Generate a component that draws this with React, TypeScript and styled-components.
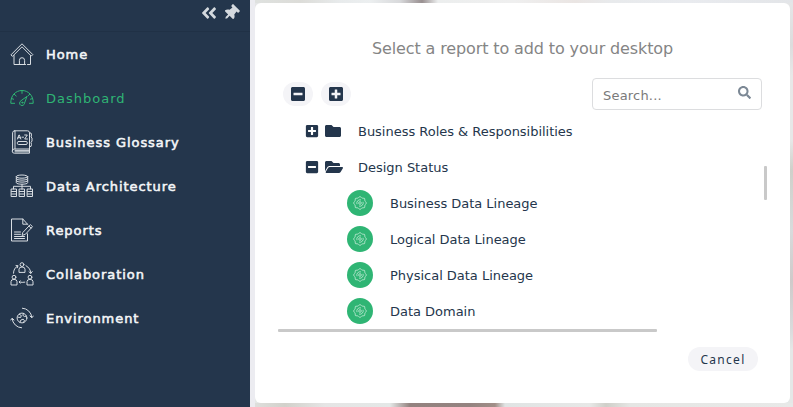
import React from 'react';
import styled, { createGlobalStyle } from 'styled-components';
import {
  FaAngleDoubleLeft,
  FaThumbtack,
  FaPlusSquare,
  FaMinusSquare,
  FaFolder,
  FaFolderOpen,
  FaSearch,
} from 'react-icons/fa';

const navy = '#24364c';
const green = '#2fb574';

const GlobalStyle = createGlobalStyle`
  * { box-sizing: border-box; }
  body {
    margin: 0;
    overflow: hidden;
    font-family: Verdana, "DejaVu Sans", sans-serif;
    color: ${navy};
  }
  svg { display: block; flex: none; }
`;

const Page = styled.div`
  display: flex;
  width: 793px;
  height: 407px;
`;

const Sidebar = styled.aside`
  width: 250px;
  height: 407px;
  background: ${navy};
  flex: none;
`;

const SidebarTop = styled.div`
  height: 32px;
  border-bottom: 1px solid #203146;
  display: flex;
  justify-content: flex-end;
  align-items: flex-start;
  gap: 5px;
  padding: 4px 8px 0 0;
  color: #d4d9de;
`;

const PinWrap = styled.span`
  width: 19px;
  height: 17px;
  display: flex;
  align-items: center;
  justify-content: flex-start;
  svg { transform: rotate(45deg); }
`;

const NavItem = styled.a<{ $active?: boolean }>`
  height: 44px;
  padding-left: 10px;
  display: flex;
  align-items: center;
  gap: 12px;
  font-size: 13px;
  letter-spacing: ${(p) => (p.$active ? '1px' : '0.94px')};
  white-space: nowrap;
  color: ${(p) => (p.$active ? green : '#f4f6f8')};
  -webkit-text-stroke: ${(p) => (p.$active ? '0' : '0.55px #f4f6f8')};
  svg {
    color: ${(p) => (p.$active ? green : '#d8dde2')};
  }
`;

const Backdrop = styled.main`
  flex: 1;
  padding: 3px 3px 4px 5px;
  background:
    linear-gradient(#ececf1, #ececf1) 0 0 / 5px 100% no-repeat,
    linear-gradient(90deg, #dfe2e0 0, #dcdcd8 50px, #e8ebec 90px, #eceff0 120px, #d8d9db 150px, #999091 172px, #eceeee 188px, #efefef 265px, #eae5e3 325px, #e8eaec 360px, #e9ebef 440px, #e3e5e8 543px) 0 0 / 100% 3px no-repeat,
    linear-gradient(90deg, #e0e1df 0, #d2d1cb 35px, #e5e5e5 75px, #e4e8e7 140px, #93827f 160px, #948380 220px, #a18f88 245px, #e0e4e4 255px, #e7e8e7 340px, #cfcfc9 356px, #e5e6e4 380px, #e8e9e8 543px) 0 100% / 100% 4px no-repeat,
    linear-gradient(180deg, #e6e7e8 0, #dcdcdd 45px, #e8e8e8 75px, #e7e8e8 140px, #cfd0ca 170px, #d8dbdc 230px, #cfcaca 280px, #dadbdc 330px, #e5e8e7 350px);
`;

const Dialog = styled.section`
  width: 535px;
  height: 400px;
  background: #fff;
  border-radius: 6px;
  display: flex;
  flex-direction: column;
`;

const Title = styled.h1`
  margin: 36px 0 0;
  font-size: 16px;
  line-height: 20px;
  font-weight: 400;
  letter-spacing: -0.12px;
  text-align: center;
  color: #858585;
`;

const Toolbar = styled.div`
  display: flex;
  align-items: center;
  gap: 8px;
  margin-top: 19px;
  padding: 0 28px;
  height: 32px;
`;

const RoundButton = styled.button`
  width: 30px;
  height: 24px;
  padding: 0;
  border: 0;
  border-radius: 12px;
  background: #f4f4f7;
  color: ${navy};
  display: flex;
  align-items: center;
  justify-content: center;
`;

const SearchBox = styled.label`
  width: 170px;
  height: 32px;
  margin-left: auto;
  border: 1px solid #dcdddf;
  border-radius: 4px;
  padding: 0 10px;
  display: flex;
  align-items: center;
  justify-content: space-between;
  font-size: 13px;
  letter-spacing: 0.2px;
  color: #7a7a7a;
  svg { color: #7c8895; margin-bottom: 3px; }
`;

const SearchText = styled.span`
  padding-top: 3px;
`;

const TreeArea = styled.div`
  display: flex;
  height: 219px;
  margin: 3px 23px 0 23px;
  justify-content: space-between;
`;

const Tree = styled.div`
  flex: 1;
`;

const TreeRow = styled.div`
  height: 36px;
  padding-left: 27px;
  display: flex;
  align-items: center;
  font-size: 13px;
  letter-spacing: -0.02px;
  white-space: nowrap;
`;

const FolderIcon = styled.span`
  width: 33px;
  margin-left: 6px;
  display: flex;
`;

const LeafRow = styled(TreeRow)`
  padding-left: 69px;
  gap: 17px;
`;

const GearBadge = styled.span`
  width: 26px;
  height: 26px;
  border-radius: 50%;
  background: ${green};
  display: flex;
  align-items: center;
  justify-content: center;
`;

const VerticalThumb = styled.div`
  width: 3px;
  height: 34px;
  margin-top: 53px;
  border-radius: 1px;
  background: #c9c9c9;
`;

const HorizontalThumb = styled.div`
  width: 379px;
  height: 3px;
  margin: -3px 0 0 23px;
  border-radius: 1px;
  background: #c9c9c9;
`;

const Footer = styled.footer`
  display: flex;
  justify-content: flex-end;
  padding: 15px 32px 0 0;
`;

const CancelButton = styled.button`
  width: 70px;
  height: 24px;
  padding: 0;
  border: 0;
  border-radius: 12px;
  background: #f4f4f7;
  color: ${navy};
  font-family: "Noto Sans", sans-serif;
  font-size: 12px;
  line-height: 23px;
  letter-spacing: 1.3px;
`;

const Line = ({ children, w = 24, h = 24 }: { children: React.ReactNode; w?: number; h?: number }) => (
  <svg width={w} height={h} viewBox={`0 0 ${w} ${h}`} fill="none" stroke="currentColor" strokeWidth="1" strokeLinejoin="round" strokeLinecap="round">
    {children}
  </svg>
);

const HomeIcon = () => (
  <Line>
    <path d="M1.2 12.6 12 1.8l10.8 10.8-1.5 1.5L12 4.8l-9.3 9.3z" />
    <path d="M4 13.5V22.5h11.5M17.5 22.5H20.5V13.5M9.4 22.5v-4.2a2.6 2.6 0 0 1 5.2 0v4.2" />
  </Line>
);

const GaugeIcon = () => (
  <Line>
    <path d="M4.6 17.3H.8C.5 9.5 5.8 4.5 12 4.5s11.5 5 11.2 12.8h-3.8M12 4.8v2.6M4.2 8.2l2 1.8M19.8 8.2l-2 1.8M1.6 12.6l2 .6M22.4 12.6l-2 .6" />
    <path d="M16.8 10.8l-2.3 6.4a2.5 2.5 0 1 1-3.8-2.3z" />
    <circle cx="12.3" cy="16.6" r=".6" />
  </Line>
);

const BookIcon = () => (
  <Line>
    <path d="M4.5.8H17.5a2 2 0 0 1 2 2V19H4.3a2 2 0 0 0 0 4.2H19.5V19M2.6 21V2.8A2 2 0 0 1 4.6.8M5 1v18M5 20.4h14M5 21.8h14M19.5 3h1.5q1 2 0 4l1 1v3l-1 1.5q1 2 0 4h-1.5" />
    <path d="M7.5 9l1.4-4h.5l1.4 4M8 7.7h2.2M12 7.2h1.5M14.7 5h2.6l-2.6 4h2.8" />
    <rect x="7.3" y="11.5" width="10" height="3" rx="1.3" />
  </Line>
);

const DataIcon = () => (
  <Line>
    <ellipse cx="12" cy="2.6" rx="5.7" ry="1.6" />
    <path d="M6.3 2.6v6.1c0 2 11.4 2 11.4 0V2.6M6.3 4.7c0 2 11.4 2 11.4 0M6.3 6.7c0 2 11.4 2 11.4 0M12 10.3v5M3.5 15v-2.7h17V15" />
    <rect x="1.5" y="15" width="5" height="7.5" />
    <rect x="9.5" y="15" width="5" height="7.5" />
    <rect x="17.5" y="15" width="5" height="7.5" />
    <path d="M1.5 17.5h5M1.5 20h5M9.5 17.5h5M9.5 20h5M17.5 17.5h5M17.5 20h5" />
  </Line>
);

const ReportIcon = () => (
  <Line>
    <path d="M17.5 6.2 12.8 1H1.5v22H17.5v-7.2M12.8 1v5.2H17.5" />
    <path d="M13.1 14.2l7.2-7.6 2.2 2-7.1 7.7-3 1zM18.9 8.1l2.2 2M4.5 14h6M4.5 16.3h6M4.5 18.5h10M4.5 20.5h10" />
  </Line>
);

const PeopleIcon = () => (
  <Line>
    <circle cx="12" cy="2.6" r="1.9" />
    <path d="M9 10V7.2q0-2.2 3-2.2t3 2.2V10z" />
    <circle cx="4" cy="15.2" r="1.9" />
    <path d="M1 22.6v-3q0-2.2 3-2.2t3 2.2v3z" />
    <circle cx="20" cy="15.2" r="1.9" />
    <path d="M17 22.6v-3q0-2.2 3-2.2t3 2.2v3z" />
    <path d="M3.5 11.2q0-5 4.3-7.3M6 3.5l2 .3-.7 2M16 3.7q4.7 2.6 4.8 7.5M19 9.8l1.8 1.6 1.4-1.8M14.8 20.2q-2.6.5-5.4-.2M10.2 18.9 9 20l1.2 1.2" />
  </Line>
);

const GlobeIcon = () => (
  <Line>
    <circle cx="12" cy="12" r="4.9" />
    <path d="M9.3 8.3l2 1.2-.6 2-2.5-.3M13.5 7.4l-.7 2 1.8 1.1 1.9-.4M10 16.1l.8-2 2.3-.9 1.3 1.2-.9 2.2" />
    <path d="M12.4 2.2a9.8 9.8 0 0 1 9.4 9M20 10l1.8 1.8L23.3 10M11.6 21.8a9.8 9.8 0 0 1-9.4-9M.8 14l1.4-1.8L4 14" />
  </Line>
);

const gearPath = Array.from({ length: 8 }, (_, i) => {
  const point = (radius: number, degrees: number) => {
    const angle = ((i * 45 + degrees) * Math.PI) / 180;
    return `${(7 + radius * Math.cos(angle)).toFixed(2)} ${(7 + radius * Math.sin(angle)).toFixed(2)}`;
  };
  return `${i ? 'L' : 'M'}${point(5.6, -16)}Q${point(7.6, 0)} ${point(5.6, 16)}Q${point(4.9, 22.5)} ${point(5.6, 29)}`;
}).join('') + 'Z';

const GearIcon = () => (
  <svg width="14" height="14" viewBox="0 0 14 14" fill="none" stroke="#cbeedb" strokeWidth=".75">
    <path d={gearPath} />
    <circle cx="7" cy="7" r="1.3" />
    <path d="M4 8.2A3.3 3.3 0 0 1 8 3.9M10 5.8A3.3 3.3 0 0 1 6 10.1" />
  </svg>
);

const navItems = [
  { label: 'Home', Icon: HomeIcon },
  { label: 'Dashboard', Icon: GaugeIcon },
  { label: 'Business Glossary', Icon: BookIcon },
  { label: 'Data Architecture', Icon: DataIcon },
  { label: 'Reports', Icon: ReportIcon },
  { label: 'Collaboration', Icon: PeopleIcon },
  { label: 'Environment', Icon: GlobeIcon },
];

const reports = ['Business Data Lineage', 'Logical Data Lineage', 'Physical Data Lineage', 'Data Domain'];

export default function App() {
  return (
    <Page>
      <GlobalStyle />
      <Sidebar>
        <SidebarTop>
          <FaAngleDoubleLeft size={18} />
          <PinWrap><FaThumbtack size={16} /></PinWrap>
        </SidebarTop>
        <nav>
          {navItems.map(({ label, Icon }) => (
            <NavItem key={label} $active={label === 'Dashboard'}>
              <Icon />
              {label}
            </NavItem>
          ))}
        </nav>
      </Sidebar>
      <Backdrop>
        <Dialog>
          <Title>Select a report to add to your desktop</Title>
          <Toolbar>
            <RoundButton aria-label="Collapse all"><FaMinusSquare size={16} /></RoundButton>
            <RoundButton aria-label="Expand all"><FaPlusSquare size={16} /></RoundButton>
            <SearchBox>
              <SearchText>Search...</SearchText>
              <FaSearch size={13} />
            </SearchBox>
          </Toolbar>
          <TreeArea>
            <Tree>
              <TreeRow>
                <FaPlusSquare size={14} />
                <FolderIcon><FaFolder size={16} /></FolderIcon>
                Business Roles &amp; Responsibilities
              </TreeRow>
              <TreeRow>
                <FaMinusSquare size={14} />
                <FolderIcon><FaFolderOpen size={18} /></FolderIcon>
                Design Status
              </TreeRow>
              {reports.map((name) => (
                <LeafRow key={name}>
                  <GearBadge><GearIcon /></GearBadge>
                  {name}
                </LeafRow>
              ))}
            </Tree>
            <VerticalThumb />
          </TreeArea>
          <HorizontalThumb />
          <Footer>
            <CancelButton>Cancel</CancelButton>
          </Footer>
        </Dialog>
      </Backdrop>
    </Page>
  );
}
